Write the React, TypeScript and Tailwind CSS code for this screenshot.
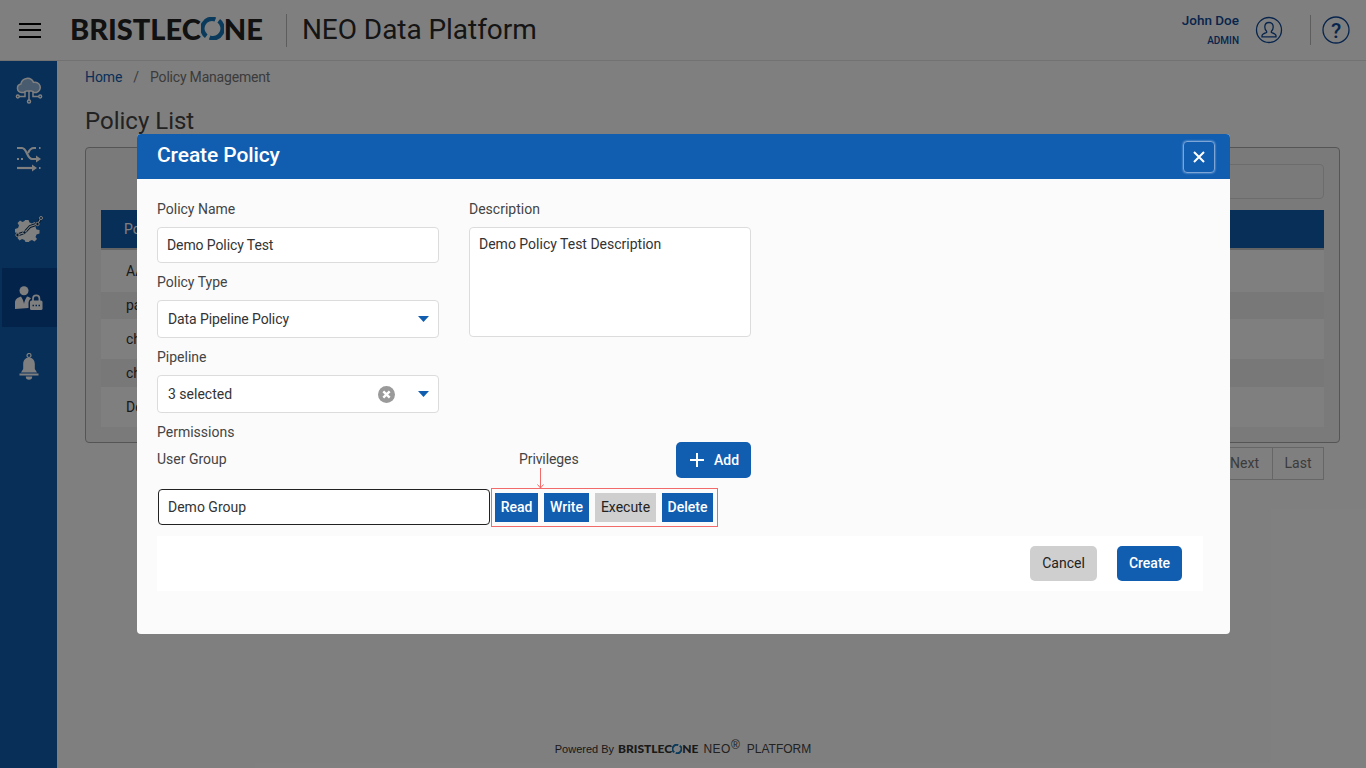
import React from "react";

const font = { fontFamily: "Roboto, 'Liberation Sans', sans-serif" };

function Logo({ small }: { small?: boolean }) {
  const ring = small ? 10 : 23;
  return (
    <span
      className={
        small
          ? "inline-flex items-center font-['Lato',sans-serif] font-black text-[12px] leading-none text-[#333]"
          : "inline-flex items-center font-['Lato',sans-serif] font-black text-[29px] leading-none text-[#222] -mt-[4px]"
      }
    >
      BRISTLEC
      <svg width={ring} height={ring} viewBox="0 0 24 24">
        <path d="M15 2.600A10 10 0 0 0 5.500 20" fill="none" stroke="#1777b8" strokeWidth="4.600" />
        <path d="M9 21.400A10 10 0 0 0 18.500 4" fill="none" stroke="#1777b8" strokeWidth="4.600" />
      </svg>
      NE
    </span>
  );
}

const CloudIcon = () => (
  <svg width="28" height="28" viewBox="0 0 28 28" fill="none" stroke="currentColor" strokeWidth="1.500" className="-mt-[1px]">
    <path fill="currentColor" fillOpacity="0.55" d="M9 16.500H6.500a4.300 4.300 0 0 1-.6-8.500 6.600 6.600 0 0 1 12.600-1.600 5 5 0 0 1 3 10.100H19c-1-1.300-2-1.500-3-1.500h-4c-1 0-2 .2-3 1.500z" />
    <path d="M14 15v9M10 15.500v5H4M18 15.500v5h6" />
    <circle cx="14" cy="25.500" r="1.500" />
    <circle cx="2.800" cy="20.500" r="1.400" />
    <circle cx="25.200" cy="20.500" r="1.400" />
  </svg>
);

const ShuffleIcon = () => (
  <svg width="26" height="26" viewBox="0 0 26 26" fill="none" stroke="currentColor" strokeWidth="2.200" className="-mt-[2px]">
    <path d="M1 2h5c5 0 5 11 10 11h6" />
    <path d="M20 9.500l5 3.500-5 3.500z" fill="currentColor" stroke="none" />
    <path d="M1 13h2M5 13h2" />
    <path d="M12 7c1.500-3.500 3-5 6-5h2M23 2h1.500" />
    <path d="M1 22h16" />
    <path d="M16 18.500l5 3.500-5 3.500z" fill="currentColor" stroke="none" />
    <path d="M23 22h1.500" />
  </svg>
);

const GearIcon = () => (
  <svg width="28" height="26" viewBox="0 0 28 26">
    <path
      fill="currentColor"
      d="M10 4h3.500l1 2.500 2.500 1 2.500-1.500L22 8.500 20.500 11l1 2.500 3 .5v3.500l-3 1-1 2.500L22 23l-2.500 2.500-2.500-1.500-2.500 1-.5 1h-3.500l-1-2-2.500-1-2.500 1.500L2.500 22 4 19.500l-1-2.500-3-.5V13l3-1 1-2.500L2.500 7 5 4.500l2.500 1.500 2-1z"
    />
    <path d="M2.500 19l7-2.500 5.500-6 7.500-2.500 3.500-6" fill="none" stroke="#082f58" strokeWidth="3" />
    <path d="M2.500 19l7-2.500 5.500-6 7.500-2.500 3.500-6" fill="none" stroke="currentColor" strokeWidth="1.100" />
    <circle cx="2.500" cy="19" r="1.700" fill="#082f58" stroke="currentColor" />
    <circle cx="9.500" cy="16.500" r="1.700" fill="#082f58" stroke="currentColor" />
    <circle cx="22.500" cy="8" r="1.700" fill="#082f58" stroke="currentColor" />
    <circle cx="26" cy="2" r="1.500" fill="#082f58" stroke="currentColor" />
  </svg>
);

const PersonLockIcon = () => (
  <svg width="28" height="24" viewBox="0 0 28 24">
    <circle cx="9" cy="4.800" r="4.500" fill="currentColor" />
    <path fill="currentColor" d="M0 23v-6c0-4 2.500-5.500 6-6.500L9 16l3-5.500c1.500.3 3 1 4 2-2 1-2.500 3-2.500 5v4.500z" />
    <path d="M9 11l-1 1.500L9 18l1-5.500z" fill="#084694" />
    <path d="M18 15v-2.500a3.200 3.200 0 0 1 6.400 0V15" fill="none" stroke="currentColor" strokeWidth="1.700" />
    <rect x="15" y="14.500" width="12.500" height="9.500" rx="1.500" fill="currentColor" />
    <path d="M17.500 19.500h1.500M20.500 19.500h1.500M23.500 19.500h1.500" stroke="#084694" strokeWidth="1.500" />
  </svg>
);

const BellIcon = () => (
  <svg width="20" height="28" viewBox="0 0 20 28">
    <circle cx="10" cy="2.500" r="2" fill="none" stroke="currentColor" strokeWidth="1.200" />
    <path fill="currentColor" d="M10 4.500c-3.800 0-5.800 3-5.800 6.500v5L2 19.500h16L15.800 16v-5c0-3.500-2-6.500-5.800-6.500z" />
    <rect x="0.500" y="20.500" width="19" height="2" fill="currentColor" />
    <path fill="currentColor" d="M6.800 23.500h6.400a3.200 3.200 0 0 1-6.400 0z" />
  </svg>
);

const Caret = () => (
  <svg width="11" height="6" viewBox="0 0 11 6" className="shrink-0">
    <path d="M0 0h11L5.500 6z" fill="#115eb1" />
  </svg>
);

function SideItem({ children, active }: { children: React.ReactNode; active?: boolean }) {
  return (
    <div
      className={
        active
          ? "h-[59px] ml-[2px] flex items-center justify-center bg-[#084694] text-white pr-[2px]"
          : "h-[59px] flex items-center justify-center text-white"
      }
    >
      {children}
    </div>
  );
}

function Row({ children, striped, h }: { children: React.ReactNode; striped?: boolean; h: string }) {
  return (
    <div className={`${h} flex items-center pl-[25px] text-[14px] text-[#333] ${striped ? "bg-white" : "bg-[#f0f0f0]"}`}>
      {children}
    </div>
  );
}

const Label = ({ children }: { children: React.ReactNode }) => (
  <div className="h-[20px] leading-[20px] text-[14px] text-[#444]">{children}</div>
);

const Priv = ({ children, off, w }: { children: React.ReactNode; off?: boolean; w: string }) => (
  <div
    className={`${w} h-[29px] flex items-center justify-center text-[14px] ${
      off ? "bg-[#cfcfcf] text-[#222]" : "bg-[#115eb1] text-white font-medium"
    }`}
  >
    {children}
  </div>
);

export default function App() {
  return (
    <div style={font} className="relative h-screen w-full overflow-hidden bg-white">
      <header className="h-[61px] flex items-center border-b border-[#e4e4e4] bg-white">
        <div className="w-[70px] pl-[19px] shrink-0">
          <div className="w-[22px] flex flex-col gap-[4.500px]">
            <div className="h-[2px] bg-black" />
            <div className="h-[2px] bg-black" />
            <div className="h-[2px] bg-black" />
          </div>
        </div>
        <Logo />
        <div className="w-px h-[33px] bg-[#bbb] ml-[23px] mr-[15px]" />
        <div className="text-[28px] leading-none text-[#2b2b2b] tracking-[-0.05px]">NEO Data Platform</div>
        <div className="ml-auto flex items-center">
          <div className="text-right text-[#0f4a99] mr-[17px] -mt-[1px]">
            <div className="text-[13.500px] leading-[16px] font-medium">John Doe</div>
            <div className="text-[10px] leading-[12px] mt-[7px] font-medium">ADMIN</div>
          </div>
          <svg width="28" height="28" viewBox="0 0 28 28" fill="none" stroke="#0f4a99" strokeWidth="1.300" className="ml-[-1px] mr-px">
            <circle cx="14" cy="14" r="12.500" />
            <path d="M14 6.500c-2.600 0-4.200 2-4.200 4.500 0 1.800.8 3.400 1.800 4.200v1.300c-2 .7-4.600 1.500-4.600 3.300v1h14v-1c0-1.800-2.600-2.600-4.600-3.300v-1.300c1-.8 1.800-2.400 1.800-4.200 0-2.500-1.600-4.500-4.200-4.500z" />
          </svg>
          <div className="w-px h-[30px] bg-[#bbb] ml-[26px] mr-[11px]" />
          <svg width="28" height="28" viewBox="0 0 28 28" fill="none" stroke="#0f4a99" className="mr-[16px]">
            <circle cx="14" cy="14" r="13" strokeWidth="1.300" />
            <text x="14" y="21.500" textAnchor="middle" fontSize="21" fontWeight="500" fill="#0f4a99" stroke="none" fontFamily="Roboto, sans-serif">?</text>
          </svg>
        </div>
      </header>

      <div className="flex h-[707px]">
        <aside className="w-[57px] shrink-0 bg-[#115eb1] flex flex-col gap-[10px]">
          <SideItem><CloudIcon /></SideItem>
          <SideItem><ShuffleIcon /></SideItem>
          <SideItem><GearIcon /></SideItem>
          <SideItem active><PersonLockIcon /></SideItem>
          <SideItem><BellIcon /></SideItem>
        </aside>

        <main className="flex-1 min-w-0 flex flex-col pl-[28px] pr-[26px]">
          <div className="h-[32px] flex items-center text-[14px]">
            <span className="text-[#115eb1] tracking-[-0.1px]">Home</span>
            <span className="mx-[11px] text-[#777]">/</span>
            <span className="text-[#777] tracking-[-0.2px]">Policy Management</span>
          </div>
          <h1 className="text-[24px] leading-[28px] text-[#444] mt-[14px]">Policy List</h1>
          <div className="mt-[12px] h-[296px] bg-[#f5f5f5] border border-[#aaa] rounded-[4px] px-[15px] pt-[16px]">
            <div className="flex justify-end">
              <div className="w-[320px] h-[35px] border border-[#d8d8d8] rounded-[4px]" />
            </div>
            <div className="mt-[11px] h-[40px] bg-[#115eb1] border-b-[2px] border-[#c8c8c8] text-white text-[14px] flex items-center pl-[23px]">Policy</div>
            <Row striped h="h-[42px]">AA</Row>
            <Row h="h-[27px]">pa</Row>
            <Row striped h="h-[40px]">ch</Row>
            <Row h="h-[28px]">ch</Row>
            <Row striped h="h-[40px]">De</Row>
          </div>
          <div className="mt-[4px] flex justify-end pr-[16px]">
            <div className="h-[33px] flex border border-[#ccc] text-[14px] text-[#777]">
              <div className="w-[78px] flex items-center justify-end pr-[13px] border-r border-[#ccc]">Next</div>
              <div className="w-[50px] flex items-center justify-center">Last</div>
            </div>
          </div>
          <div className="mt-auto pb-[10px] mr-[59px] flex items-center justify-center font-['Liberation_Sans',sans-serif]">
            <span className="text-[11px] text-[#333] mr-[4px]">Powered By</span>
            <Logo small />
            <span className="text-[12px] text-[#444] ml-[5px] tracking-[0.5px]">NEO</span>
            <span className="text-[12px] leading-none text-[#444] -mt-[8px]">®</span>
            <span className="text-[12px] text-[#444] ml-[7px]">PLATFORM</span>
          </div>
        </main>
      </div>

      <div className="absolute inset-0 bg-black/50" />

      <div className="absolute left-[137px] top-[134px] w-[1093px] h-[500px] rounded-[4px] overflow-hidden bg-[#fbfbfb]">
        <div className="h-[45px] bg-[#115eb1] flex items-center justify-between pl-[20px] pr-[15px]">
          <div className="text-[21px] font-medium text-white -mt-[2px] tracking-[-0.1px]">Create Policy</div>
          <div className="w-[32px] h-[32px] border border-[#7da6d6] rounded-[4px] flex items-center justify-center shadow-[0_0_2px_#a9c6e8]">
            <svg width="12" height="12" viewBox="0 0 12 12" stroke="#fff" strokeWidth="2">
              <path d="M1 1l10 10M11 1L1 11" />
            </svg>
          </div>
        </div>

        <div className="pl-[20px] pt-[20px]">
          <div className="flex gap-[30px] w-[594px]">
            <div className="w-[282px]">
              <Label>Policy Name</Label>
              <div className="mt-[8px] h-[36px] bg-white border border-[#dcdcdc] rounded-[4px] flex items-center pl-[9px] text-[14px] text-[#333] tracking-[-0.1px]">Demo Policy Test</div>
              <div className="mt-[9px]"><Label>Policy Type</Label></div>
              <div className="mt-[8px] h-[38px] bg-white border border-[#dcdcdc] rounded-[4px] flex items-center justify-between pl-[10px] pr-[9px] text-[14px] text-[#333] tracking-[-0.1px]">
                <span>Data Pipeline Policy</span>
                <Caret />
              </div>
              <div className="mt-[9px]"><Label>Pipeline</Label></div>
              <div className="mt-[8px] h-[38px] bg-white border border-[#dcdcdc] rounded-[4px] flex items-center pl-[10px] pr-[9px] text-[14px] text-[#333]">
                <span>3 selected</span>
                <svg width="17" height="17" viewBox="0 0 17 17" className="ml-auto mr-[23px]">
                  <circle cx="8.500" cy="8.500" r="8.500" fill="#9a9a9a" />
                  <path d="M5.300 5.300l6.400 6.400M11.700 5.300l-6.400 6.400" stroke="#fff" strokeWidth="2.400" />
                </svg>
                <Caret />
              </div>
            </div>
            <div className="w-[282px]">
              <Label>Description</Label>
              <div className="mt-[8px] h-[110px] bg-white border border-[#dcdcdc] rounded-[4px] pl-[9px] pt-[6px] text-[14px] leading-[20px] text-[#333]">Demo Policy Test Description</div>
            </div>
          </div>

          <div className="mt-[9px]"><Label>Permissions</Label></div>

          <div className="relative flex items-center w-[594px] h-[36px]">
            <div className="w-[362px] -mt-[2px]"><Label>User Group</Label></div>
            <div className="w-[157px] -mt-[2px] tracking-[-0.1px]"><Label>Privileges</Label></div>
            <div className="w-[75px] h-[36px] rounded-[5px] bg-[#115eb1] text-white text-[14px] font-medium flex items-center pl-[13px] gap-[9px]">
              <svg width="16" height="16" viewBox="0 0 16 16" stroke="#fff" strokeWidth="2">
                <path d="M8 1v14M1 8h14" />
              </svg>
              Add
            </div>
            <svg width="9" height="21" viewBox="0 0 9 21" fill="none" stroke="#f26a6a" className="absolute left-[379px] top-[26px]">
              <path d="M4.500 0v20M1.500 16.500l3 3.500 3-3.500" />
            </svg>
          </div>

          <div className="mt-[10px] flex items-center pl-px">
            <div className="w-[332px] h-[36px] -mt-[1px] bg-white border border-[#222] rounded-[4px] flex items-center pl-[9px] text-[14px] text-[#333]">Demo Group</div>
            <div className="ml-px h-[39px] w-[227px] border border-[#f26a6a] flex items-center pl-[3px] gap-[6px]">
              <Priv w="w-[43px]">Read</Priv>
              <Priv w="w-[45px]">Write</Priv>
              <Priv off w="w-[61px]">Execute</Priv>
              <Priv w="w-[51px]">Delete</Priv>
            </div>
          </div>

          <div className="mt-[9px] h-[55px] w-[1046px] bg-white flex items-center justify-end pr-[21px] gap-[20px]">
            <div className="w-[67px] h-[35px] rounded-[5px] bg-[#cfcfcf] text-[14px] text-[#222] flex items-center justify-center">Cancel</div>
            <div className="w-[65px] h-[35px] rounded-[5px] bg-[#115eb1] text-[14px] font-medium text-white flex items-center justify-center">Create</div>
          </div>
        </div>
      </div>
    </div>
  );
}
